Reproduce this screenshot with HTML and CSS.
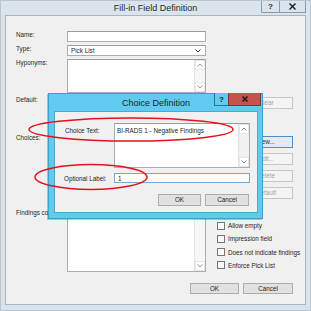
FILE: index.html
```html
<!DOCTYPE html>
<html>
<head>
<meta charset="utf-8">
<link rel="stylesheet" href="styles.css">
</head>
<body>
<div class="window">
  <div class="titlebar">
    <div class="title">Fill-in Field Definition</div>
    <div class="tbtns">
      <span class="tb help">?</span>
      <span class="tb close"><svg width="9" height="7" viewBox="0 0 9 7"><path d="M1.5 0.5 L7.5 6.5 M7.5 0.5 L1.5 6.5" stroke="#1a1a1a" stroke-width="1.4"/></svg></span>
    </div>
  </div>
  <div class="client">
    <div class="form">
      <div class="lbl">Name:</div>
      <div class="input"></div>
      <div></div>

      <div class="lbl">Type:</div>
      <div class="input combo"><span>Pick List</span><svg class="chev" width="6" height="4" viewBox="0 0 6 4"><path d="M0.5 0.5 L3 3 L5.5 0.5" fill="none" stroke="#333" stroke-width="1"/></svg></div>
      <div></div>

      <div class="lbl">Hyponyms:</div>
      <div class="input area">
        <div class="scroll">
          <span class="arrow"><svg width="6" height="4" viewBox="0 0 6 4"><path d="M0.5 3.5 L3 1 L5.5 3.5" fill="none" stroke="#9a9a9a" stroke-width="1"/></svg></span>
          <span class="arrow"><svg width="6" height="4" viewBox="0 0 6 4"><path d="M0.5 0.5 L3 3 L5.5 0.5" fill="none" stroke="#9a9a9a" stroke-width="1"/></svg></span>
        </div>
      </div>
      <div></div>

      <div class="lbl">Default:</div>
      <div class="input"></div>
      <div class="rcol"><button class="btn dis">Clear</button></div>

      <div class="lbl choices">Choices:</div>
      <div class="input"></div>
      <div class="rcol stack">
        <button class="btn def">New...</button>
        <button class="btn dis">Edit...</button>
        <button class="btn dis">Delete</button>
        <button class="btn dis">Default</button>
      </div>

      <div class="lbl findings">Findings comment:</div>
      <div class="input area">
        <div class="scroll">
          <span class="arrow"><svg width="6" height="4" viewBox="0 0 6 4"><path d="M0.5 3.5 L3 1 L5.5 3.5" fill="none" stroke="#9a9a9a" stroke-width="1"/></svg></span>
          <span class="arrow"><svg width="6" height="4" viewBox="0 0 6 4"><path d="M0.5 0.5 L3 3 L5.5 0.5" fill="none" stroke="#9a9a9a" stroke-width="1"/></svg></span>
        </div>
      </div>
      <div class="checks">
        <label class="chk"><span class="box"></span>Allow empty</label>
        <label class="chk"><span class="box"></span>Impression field</label>
        <label class="chk"><span class="box"></span>Does not indicate findings</label>
        <label class="chk"><span class="box"></span>Enforce Pick List</label>
      </div>
    </div>
    <div class="footer">
      <button class="btn">OK</button>
      <button class="btn">Cancel</button>
    </div>
  </div>

  <div class="dialog">
    <div class="dtitlebar">
      <div class="dtitle">Choice Definition</div>
      <div class="dtbtns">
        <span class="dtb dhelp">?</span>
        <span class="dtb dclose"><svg width="8" height="6" viewBox="0 0 8 6"><path d="M1.5 0.5 L6.5 5.5 M6.5 0.5 L1.5 5.5" stroke="#1a1a1a" stroke-width="1.5"/></svg></span>
      </div>
    </div>
    <div class="dclient">
      <div class="dform">
        <div class="lbl dl1">Choice Text:</div>
        <div class="input darea">
          <span class="val">BI-RADS 1 - Negative Findings</span>
          <div class="scroll">
            <span class="arrow"><svg width="6" height="4" viewBox="0 0 6 4"><path d="M0.5 3.5 L3 1 L5.5 3.5" fill="none" stroke="#8a8a8a" stroke-width="1"/></svg></span>
            <span class="arrow"><svg width="6" height="4" viewBox="0 0 6 4"><path d="M0.5 0.5 L3 3 L5.5 0.5" fill="none" stroke="#8a8a8a" stroke-width="1"/></svg></span>
          </div>
        </div>
        <div class="lbl dl2">Optional Label:</div>
        <div class="input focus"><span class="val">1</span></div>
      </div>
      <div class="dfooter">
        <button class="btn dok">OK</button>
        <button class="btn dcancel">Cancel</button>
      </div>
    </div>
  </div>

  <svg class="marks" width="311" height="311" viewBox="0 0 311 311">
    <ellipse cx="131" cy="129.5" rx="102" ry="11.5" fill="none" stroke="#e3111b" stroke-width="1.5"/>
    <ellipse cx="91" cy="177" rx="56" ry="12.5" fill="none" stroke="#e3111b" stroke-width="1.5"/>
  </svg>
</div>
</body>
</html>
```

FILE: styles.css
```css
* { box-sizing: border-box; }
html, body { margin: 0; padding: 0; background: #ffffff; }
body {
  font-family: "Liberation Sans", Arial, sans-serif;
  font-size: 6.3px;
  color: #1e1e1e;
}
.window {
  position: relative;
  width: 311px;
  height: 311px;
  background: #d9e4ec;
  border: 1px solid #b9c6d0;
  padding: 0 4px 5px 4px;
  display: flex;
  flex-direction: column;
  overflow: hidden;
}
.titlebar {
  height: 14px;
  flex: none;
  position: relative;
  display: flex;
  justify-content: center;
}
.title {
  font-size: 9px;
  line-height: 15px;
  color: #2a2a2a;
}
.tbtns {
  position: absolute;
  right: 0px;
  top: -1px;
  display: flex;
}
.tb {
  height: 13px;
  border: 1px solid #8d99a3;
  border-top: none;
  display: flex;
  align-items: center;
  justify-content: center;
  background: #dae4ec;
}
.tb.help { width: 18px; font-weight: bold; font-size: 8px; border-right: none; }
.tb.close { width: 27px; }

.client {
  flex: 1;
  background: #f0f0f0;
  border: 1px solid #a9b5bf;
  padding: 15px 12px 0 10px;
  display: flex;
  flex-direction: column;
}
.form {
  display: grid;
  grid-template-columns: 51px 139px 87px;
  grid-template-rows: 11px 11px 34px 12px 91px 67px;
  row-gap: 3px;
}
.lbl { line-height: 7px; white-space: nowrap; }
.lbl.choices { padding-top: 23px; }
.lbl.findings { padding-top: 4px; }
.input {
  background: #ffffff;
  border: 1px solid #abadb3;
  border-top-color: #9a9ca3;
  position: relative;
}
.combo {
  display: flex;
  align-items: center;
  justify-content: space-between;
  padding: 0 4px 0 3px;
  line-height: 9px;
}
.chev { margin-top: 1px; }
.area { display: flex; justify-content: flex-end; }
.scroll {
  width: 11px;
  flex: none;
  border-left: 1px solid #e3e3e3;
  background: #f7f7f7;
  display: flex;
  flex-direction: column;
  justify-content: space-between;
}
.arrow {
  height: 10px;
  display: flex;
  align-items: center;
  justify-content: center;
  background: #ffffff;
  border: 1px solid #e6e6e6;
}
.rcol { display: flex; flex-direction: column; align-items: flex-end; }
.rcol .btn:first-child { margin-top: 1px; }
.stack { padding-top: 25px; gap: 5px; }
.stack .btn:first-child { margin-top: 0; }
.btn {
  font-family: inherit;
  font-size: 6.3px;
  color: #1e1e1e;
  width: 54px;
  height: 12px;
  padding: 0;
  margin: 0;
  background: #e1e1e1;
  border: 1px solid #adadad;
  border-radius: 0;
  line-height: 10px;
}
.btn.dis { background: #f4f4f4; border-color: #c6c6c6; color: #a3a3a3; }
.btn.def { border-color: #4a8fc9; background: #e3eaf1; }
.checks {
  padding: 14px 0 0 11px;
  display: flex;
  flex-direction: column;
}
.chk {
  height: 14px;
  display: flex;
  align-items: center;
  white-space: nowrap;
}
.box {
  flex: none;
  width: 8px;
  height: 8px;
  border: 1px solid #767676;
  background: #fafafa;
  margin-right: 3px;
}
.footer {
  display: flex;
  justify-content: flex-end;
  gap: 4px;
  margin-top: 11px;
}
.footer .btn { width: 49px; height: 11px; }
.footer .btn + .btn { width: 50px; }

.dialog {
  position: absolute;
  left: 47px;
  top: 92px;
  width: 215px;
  height: 126px;
  background: #60cbf0;
  border: 1px solid #3f9fcb;
  box-shadow: -1px 1px 0 rgba(0,0,0,0.22);
  padding: 0 4px 5px 5px;
  display: flex;
  flex-direction: column;
}
.dtitlebar {
  height: 17px;
  flex: none;
  position: relative;
  display: flex;
  justify-content: center;
}
.dtitle { font-size: 9px; line-height: 18px; color: #1e1e1e; }
.dtbtns { position: absolute; right: -3px; top: -1px; display: flex; }
.dtb {
  height: 13px;
  display: flex;
  align-items: center;
  justify-content: center;
  border: 1px solid #2f6f8f;
  border-top: none;
}
.dhelp { width: 14px; font-weight: bold; font-size: 8px; border-right: none; background: #60cbf0; }
.dclose { width: 33px; background: #c7514b; border-color: #7a3a36; }
.dclient {
  flex: 1;
  background: #f0f0f0;
  border: 1px solid #4aa8d3;
  padding: 11px 8px 0 9px;
  display: flex;
  flex-direction: column;
}
.dform {
  display: grid;
  grid-template-columns: 50px 136px;
  grid-template-rows: 45px 10px;
  row-gap: 5px;
}
.dl1 { padding-top: 4px; padding-left: 1px; }
.dl2 { align-self: center; }
.darea { display: flex; justify-content: space-between; }
.darea .val { padding: 3px 0 0 2px; line-height: 7px; }
.darea .scroll { background: #f0f0f0; }
.focus { border-color: #7aa7cf; display: flex; align-items: center; padding-left: 3px; }
.dfooter {
  display: flex;
  justify-content: flex-end;
  gap: 4px;
  margin-top: 11px;
}
.dok { width: 43px; }
.dcancel { width: 44px; }

.marks { position: absolute; left: -1px; top: -1px; pointer-events: none; }
```
